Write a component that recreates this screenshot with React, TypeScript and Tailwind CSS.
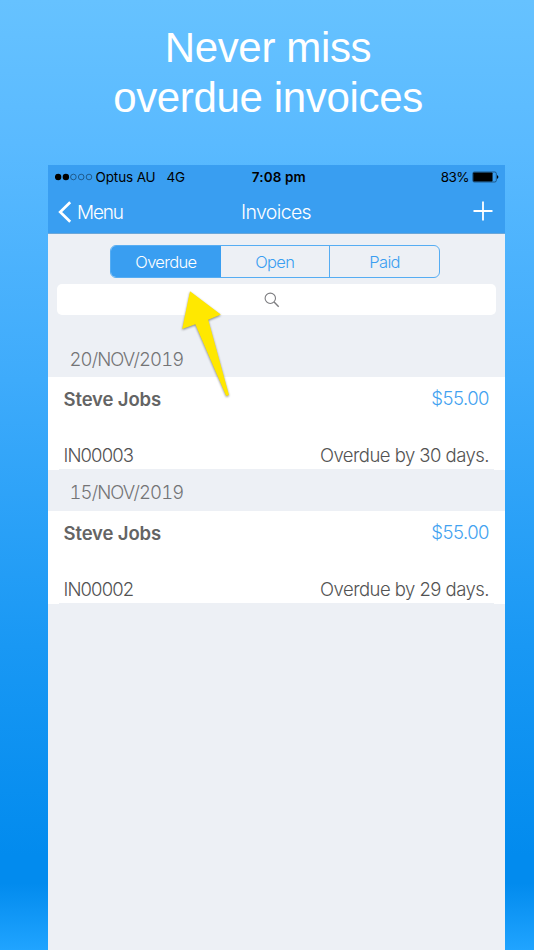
type Invoice = { date: string; client: string; amount: string; number: string; status: string };

const invoices: Invoice[] = [
  { date: "20/NOV/2019", client: "Steve Jobs", amount: "$55.00", number: "IN00003", status: "Overdue by 30 days." },
  { date: "15/NOV/2019", client: "Steve Jobs", amount: "$55.00", number: "IN00002", status: "Overdue by 29 days." },
];

function StatusBar() {
  return (
    <div className="grid h-6 grid-cols-[1fr_auto_1fr] items-center pl-[7px] pr-[6px] text-[13.5px] text-black">
      <div className="flex items-center">
        <svg width="38" height="8" viewBox="0 0 38 8" className="mr-[3px]">
          <circle cx="3.1" cy="4" r="3.2" />
          <circle cx="10.9" cy="4" r="3.2" />
          {[18.4, 26.2, 34].map((x) => (
            <circle key={x} cx={x} cy="4" r="2.8" fill="none" stroke="#163f63" strokeWidth="0.7" />
          ))}
        </svg>
        <span className="tracking-[-0.12px]">Optus AU</span>
        <span className="ml-[11px] tracking-[-0.3px]">4G</span>
      </div>
      <span className="pl-[4px] font-semibold tracking-[0.1px]">7:08 pm</span>
      <div className="flex items-center justify-end">
        <span className="mr-[3px] tracking-[-0.55px]">83%</span>
        <svg width="27" height="12" viewBox="0 0 28 12">
          <rect x="0.8" y="0.8" width="24.4" height="10.4" rx="1.6" fill="none" stroke="#12395a" strokeWidth="0.7" />
          <rect x="1.3" y="1.3" width="20" height="9.4" rx="0.8" />
          <path d="M26 4.2c1 .3 1.3 1 1.3 1.8S27 7.5 26 7.8z" />
        </svg>
      </div>
    </div>
  );
}

function NavBar() {
  return (
    <div className="grid h-[45px] grid-cols-[1fr_auto_1fr] items-center pl-[10.5px] pr-[12px] text-[19.5px] font-light text-white">
      <div className="flex items-center">
        <svg width="14" height="22" viewBox="0 0 14 22" fill="none" stroke="white" strokeWidth="2.7" className="mr-[5px]">
          <path d="M12.2 1.2 2.2 11l10 9.8" />
        </svg>
        <span className="pt-[3px] text-[19px] tracking-[-1.2px]">Menu</span>
      </div>
      <span className="pl-px pt-[2px] tracking-[-0.65px]">Invoices</span>
      <svg width="20" height="20" viewBox="0 0 20 20" stroke="white" strokeWidth="1.8" className="relative -top-px justify-self-end">
        <path d="M10 .5v19M.5 10h19" />
      </svg>
    </div>
  );
}

function InvoiceSection({ invoice, first }: { invoice: Invoice; first: boolean }) {
  return (
    <section>
      <div className={`flex items-end pl-[22px] text-[18.5px] font-light tabular-nums tracking-[-0.9px] text-[#747476] ${first ? "h-[62px] pb-[3px]" : "h-[41.5px] pb-[4px]"}`}>
        {invoice.date}
      </div>
      <div className="flex h-[92.5px] flex-col justify-between bg-white px-[16px] pt-[8px] text-[18.5px] leading-[26px] text-[#535353]">
        <div className="flex justify-between">
          <span className="pt-px text-[18.5px] font-semibold leading-[26px] tracking-[-0.12px] text-[#646464]">{invoice.client}</span>
          <span className="font-light tracking-[-0.5px] text-[#43a2f0]">{invoice.amount}</span>
        </div>
        <div>
          <div className="flex justify-between pb-px font-light">
            <span className="tracking-[-0.9px]">{invoice.number}</span>
            <span className="tracking-[-0.53px]">{invoice.status}</span>
          </div>
          <div className="-mx-[5px] h-px bg-[#edf0f5]" />
        </div>
      </div>
    </section>
  );
}

export default function App() {
  return (
    <main className="relative h-[950px] w-[534px] overflow-hidden bg-[linear-gradient(180deg,#66c2ff_0%,#5abaff_15%,#3eabfb_40%,#1998f4_68%,#028bee_90%,#028bee_93%,#20a4ff_100%)] font-['Inter',sans-serif]">
      <h1 className="h-[165px] pl-[2px] pt-[23px] text-center font-['Liberation_Sans',sans-serif] text-[42px] leading-[50px] tracking-[-0.35px] text-white">
        Never miss
        <br />
        overdue invoices
      </h1>

      <div className="ml-[47.5px] h-[785px] w-[457.5px] bg-[#edf0f5]">
        <header className="h-[69px] border-b border-[#6ba7d9] bg-[#399ef1]">
          <StatusBar />
          <NavBar />
        </header>

        <div className="flex justify-center pt-[11px]">
          <div className="mr-[2px] grid h-[33px] w-[330px] grid-cols-3 overflow-hidden rounded-[6px] border border-[#56adf3] text-center text-[16.5px] font-light leading-[33px] tracking-[-0.65px] text-[#399ef1]">
            <span className="bg-[#399ef1] text-white">Overdue</span>
            <span className="border-r border-[#56adf3]">Open</span>
            <span>Paid</span>
          </div>
        </div>

        <div className="mx-[9px] mt-[6px] flex h-[31px] items-center justify-center rounded-[5px] bg-white">
          <svg width="16" height="16" viewBox="0 0 16 16" fill="none" stroke="#7d7d80" className="mr-[9px]">
            <circle cx="6.3" cy="6.3" r="5.2" strokeWidth="1.1" />
            <path d="m10.1 10.1 4.6 4.6" strokeWidth="1.4" />
          </svg>
        </div>

        {invoices.map((invoice, i) => (
          <InvoiceSection key={invoice.number} invoice={invoice} first={i === 0} />
        ))}
      </div>

      <svg className="absolute left-[172px] top-[282px] drop-shadow-[0_1px_1px_rgba(0,0,0,0.45)]" width="66" height="122" viewBox="172 282 66 122">
        <path d="M190 291.2 220.8 314.6 208.2 319.8 229 395 226.2 396 195.3 324.2 182.2 329Z" fill="#ffe800" />
      </svg>
    </main>
  );
}
